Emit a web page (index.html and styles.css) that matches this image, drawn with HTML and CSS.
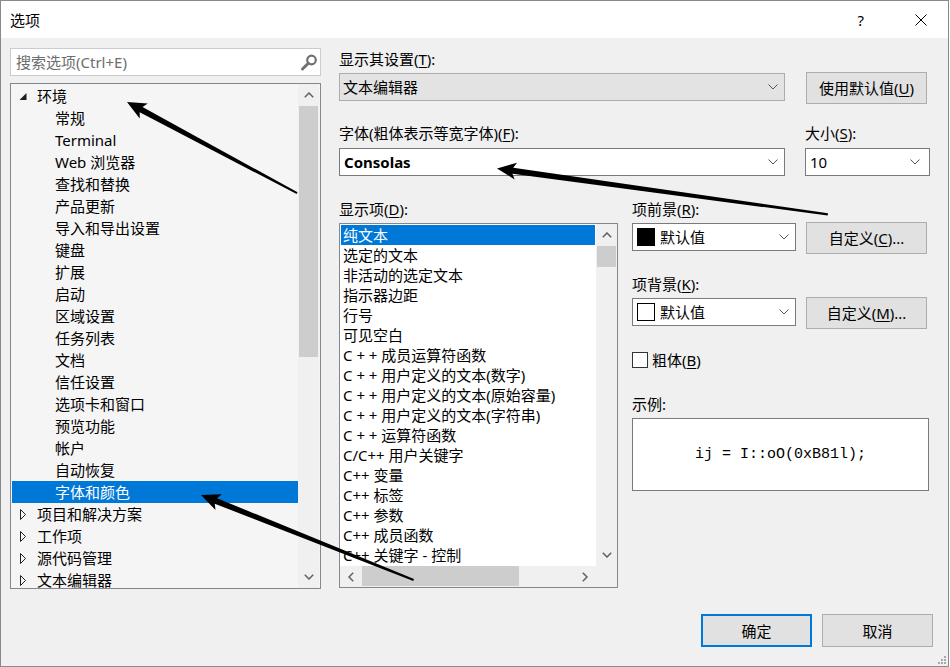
FILE: index.html
```html
<!DOCTYPE html>
<html>
  <head>
    <meta charset="utf-8" />
    <title>选项</title>
    <link rel="stylesheet" href="styles.css">
  </head>
  <body>
    <div class="dialog">
      <div class="titlebar">
        <span class="title">选项</span>
        <span class="help">?</span>
        <svg class="close" width="12" height="12" viewBox="0 0 12 12">
          <path d="M0.5 0.5 L11.5 11.5 M11.5 0.5 L0.5 11.5" stroke="#000" stroke-width="1" fill="none" />
        </svg>
      </div>

      <div class="content">
        <!-- left: search + tree -->
        <div class="left">
          <div class="search">
            <span class="placeholder">搜索选项(Ctrl+E)</span>
            <svg class="search-icon" width="18" height="18" viewBox="0 0 18 18">
              <circle cx="11.5" cy="6" r="4.3" stroke="#717171" stroke-width="2.2" fill="none" />
              <path d="M8.3 9.2 L2.5 15" stroke="#717171" stroke-width="3" stroke-linecap="round" />
            </svg>
          </div>

          <div class="tree">
            <ul class="tree-rows">
              <li class="row">
                <svg class="toggle" width="10" height="14" viewBox="0 0 10 14"><polygon points="7.5,4 7.5,11 0.5,11" fill="#1e1e1e" /></svg>
                环境
              </li>
              <li class="row leaf">常规</li>
              <li class="row leaf">Terminal</li>
              <li class="row leaf">Web 浏览器</li>
              <li class="row leaf">查找和替换</li>
              <li class="row leaf">产品更新</li>
              <li class="row leaf">导入和导出设置</li>
              <li class="row leaf">键盘</li>
              <li class="row leaf">扩展</li>
              <li class="row leaf">启动</li>
              <li class="row leaf">区域设置</li>
              <li class="row leaf">任务列表</li>
              <li class="row leaf">文档</li>
              <li class="row leaf">信任设置</li>
              <li class="row leaf">选项卡和窗口</li>
              <li class="row leaf">预览功能</li>
              <li class="row leaf">帐户</li>
              <li class="row leaf">自动恢复</li>
              <li class="row leaf selected">字体和颜色</li>
              <li class="row">
                <svg class="toggle" width="10" height="14" viewBox="0 0 10 14"><polygon points="1.5,2.5 6.5,7.5 1.5,12.5" fill="none" stroke="#1e1e1e" stroke-width="1" /></svg>
                项目和解决方案
              </li>
              <li class="row">
                <svg class="toggle" width="10" height="14" viewBox="0 0 10 14"><polygon points="1.5,2.5 6.5,7.5 1.5,12.5" fill="none" stroke="#1e1e1e" stroke-width="1" /></svg>
                工作项
              </li>
              <li class="row">
                <svg class="toggle" width="10" height="14" viewBox="0 0 10 14"><polygon points="1.5,2.5 6.5,7.5 1.5,12.5" fill="none" stroke="#1e1e1e" stroke-width="1" /></svg>
                源代码管理
              </li>
              <li class="row">
                <svg class="toggle" width="10" height="14" viewBox="0 0 10 14"><polygon points="1.5,2.5 6.5,7.5 1.5,12.5" fill="none" stroke="#1e1e1e" stroke-width="1" /></svg>
                文本编辑器
              </li>
            </ul>
            <div class="vscroll tree-scroll">
              <div class="sbtn"><svg width="10" height="6" viewBox="0 0 10 6"><path d="M0.8 5.2 L5 1 L9.2 5.2" stroke="#606060" stroke-width="1.5" fill="none" /></svg></div>
              <div class="thumb tree-thumb"></div>
              <div class="track"></div>
              <div class="sbtn"><svg width="10" height="6" viewBox="0 0 10 6"><path d="M0.8 0.8 L5 5 L9.2 0.8" stroke="#606060" stroke-width="1.5" fill="none" /></svg></div>
            </div>
          </div>
        </div>

        <!-- right: settings -->
        <div class="right">
          <div class="top-grid">
            <div class="label">显示其设置(<u>T</u>):</div>
            <div></div>
            <div class="combo disabled">
              <span class="combo-text">文本编辑器</span>
              <svg class="chev" width="10" height="6" viewBox="0 0 10 6"><path d="M0.5 0.5 L5 5 L9.5 0.5" stroke="#555" stroke-width="1" fill="none" /></svg>
            </div>
            <button class="btn btn-default">使用默认值(<u>U</u>)</button>

            <div class="label label-gap">字体(粗体表示等宽字体)(<u>F</u>):</div>
            <div class="label label-gap">大小(<u>S</u>):</div>
            <div class="combo combo-font">
              <span class="combo-text bold">Consolas</span>
              <svg class="chev" width="10" height="6" viewBox="0 0 10 6"><path d="M0.5 0.5 L5 5 L9.5 0.5" stroke="#555" stroke-width="1" fill="none" /></svg>
            </div>
            <div class="combo combo-font combo-size">
              <span class="combo-text">10</span>
              <svg class="chev" width="10" height="6" viewBox="0 0 10 6"><path d="M0.5 0.5 L5 5 L9.5 0.5" stroke="#555" stroke-width="1" fill="none" /></svg>
            </div>
          </div>

          <div class="lower">
            <div class="items-col">
              <div class="label">显示项(<u>D</u>):</div>
              <div class="listbox">
                <ul class="items">
                  <li class="selected">纯文本</li>
                  <li>选定的文本</li>
                  <li>非活动的选定文本</li>
                  <li>指示器边距</li>
                  <li>行号</li>
                  <li>可见空白</li>
                  <li>C + + 成员运算符函数</li>
                  <li>C + + 用户定义的文本(数字)</li>
                  <li>C + + 用户定义的文本(原始容量)</li>
                  <li>C + + 用户定义的文本(字符串)</li>
                  <li>C + + 运算符函数</li>
                  <li>C/C++ 用户关键字</li>
                  <li>C++ 变量</li>
                  <li>C++ 标签</li>
                  <li>C++ 参数</li>
                  <li>C++ 成员函数</li>
                  <li>C++ 关键字 - 控制</li>
                </ul>
                <div class="vscroll list-scroll">
                  <div class="sbtn"><svg width="10" height="6" viewBox="0 0 10 6"><path d="M0.8 5.2 L5 1 L9.2 5.2" stroke="#606060" stroke-width="1.5" fill="none" /></svg></div>
                  <div class="thumb list-thumb"></div>
                  <div class="track"></div>
                  <div class="sbtn"><svg width="10" height="6" viewBox="0 0 10 6"><path d="M0.8 0.8 L5 5 L9.2 0.8" stroke="#606060" stroke-width="1.5" fill="none" /></svg></div>
                </div>
                <div class="hscroll">
                  <div class="sbtn"><svg width="6" height="10" viewBox="0 0 6 10"><path d="M5.2 0.8 L1 5 L5.2 9.2" stroke="#606060" stroke-width="1.5" fill="none" /></svg></div>
                  <div class="thumb h-thumb"></div>
                  <div class="track"></div>
                  <div class="sbtn"><svg width="6" height="10" viewBox="0 0 6 10"><path d="M0.8 0.8 L5 5 L0.8 9.2" stroke="#606060" stroke-width="1.5" fill="none" /></svg></div>
                </div>
                <div class="corner"></div>
              </div>
            </div>

            <div class="color-col">
              <div class="label">项前景(<u>R</u>):</div>
              <div class="color-row">
                <div class="combo combo-color">
                  <span class="swatch black"></span>
                  <span class="combo-text">默认值</span>
                  <svg class="chev" width="10" height="6" viewBox="0 0 10 6"><path d="M0.5 0.5 L5 5 L9.5 0.5" stroke="#555" stroke-width="1" fill="none" /></svg>
                </div>
                <button class="btn btn-custom">自定义(<u>C</u>)...</button>
              </div>

              <div class="label label-bg">项背景(<u>K</u>):</div>
              <div class="color-row">
                <div class="combo combo-color">
                  <span class="swatch white"></span>
                  <span class="combo-text">默认值</span>
                  <svg class="chev" width="10" height="6" viewBox="0 0 10 6"><path d="M0.5 0.5 L5 5 L9.5 0.5" stroke="#555" stroke-width="1" fill="none" /></svg>
                </div>
                <button class="btn btn-custom">自定义(<u>M</u>)...</button>
              </div>

              <label class="check-row">
                <span class="checkbox"></span>
                粗体(<u>B</u>)
              </label>

              <div class="label label-sample">示例:</div>
              <div class="sample">ij = I::oO(0xB81l);</div>
            </div>
          </div>
        </div>
      </div>

      <div class="footer">
        <button class="btn btn-ok">确定</button>
        <button class="btn btn-cancel">取消</button>
      </div>

      <svg class="grip" width="8" height="8" viewBox="0 0 8 8">
        <rect x="6" y="0" width="2" height="2" fill="#a8a8a8" />
        <rect x="3" y="3" width="2" height="2" fill="#a8a8a8" />
        <rect x="6" y="3" width="2" height="2" fill="#a8a8a8" />
        <rect x="0" y="6" width="2" height="2" fill="#a8a8a8" />
        <rect x="3" y="6" width="2" height="2" fill="#a8a8a8" />
        <rect x="6" y="6" width="2" height="2" fill="#a8a8a8" />
      </svg>

      <!-- annotation arrows drawn over the dialog -->
      <svg class="arrows" width="950" height="667" viewBox="0 0 950 667">
        <g transform="translate(127 102) rotate(28.2)">
          <polygon points="0,0 19,-8.5 16,-3 193,-1 193,1 16,3 19,8.5" fill="#000" />
        </g>
        <g transform="translate(497 168.5) rotate(7.9)">
          <polygon points="0,0 19,-8.5 16,-3 334,-1.2 334,1.2 16,3 19,8.5" fill="#000" />
        </g>
        <g transform="translate(201 495) rotate(21.8)">
          <polygon points="0,0 19,-8.5 16,-3 229,-1 229,1 16,3 19,8.5" fill="#000" />
        </g>
      </svg>
    </div>
  </body>
</html>
```

FILE: styles.css
```css
* {
  box-sizing: border-box;
}
body,
html {
  margin: 0;
  background: #fff;
}
body {
  font-family: "Noto Sans", "Noto Sans CJK SC", sans-serif;
  font-size: 15px;
  color: #000;
}
u {
  text-decoration-thickness: 1px;
  text-underline-offset: 2px;
}
ul {
  list-style: none;
  margin: 0;
  padding: 0;
}

.dialog {
  position: relative;
  width: 949px;
  height: 667px;
  border: 1px solid #8a8a8a;
  background: #f0f0f0;
  display: flex;
  flex-direction: column;
}

/* title bar */
.titlebar {
  height: 37px;
  background: #fff;
  display: flex;
  align-items: center;
  padding: 0 0 0 9px;
  line-height: 20px;
}
.title {
  flex-grow: 1;
}
.help {
  margin-right: 51px;
}
.close {
  margin-right: 21px;
}

/* main area */
.content {
  display: flex;
  padding: 10px 0 0 9px;
}
.left {
  width: 311px;
  display: flex;
  flex-direction: column;
}
.search {
  height: 28px;
  border: 1px solid #c9ccd4;
  background: #fff;
  display: flex;
  align-items: center;
  padding: 0 2px 0 5px;
  line-height: 20px;
}
.placeholder {
  flex-grow: 1;
  color: #6d6d6d;
}
.search-icon {
  margin-top: 1px;
}
.tree {
  margin-top: 7px;
  height: 506px;
  border: 1px solid #828790;
  background: #f5f5f5;
  display: flex;
  overflow: hidden;
}
.tree-rows {
  width: 287px;
  padding: 1px 0 0 1px;
}
.row {
  height: 22px;
  line-height: 22px;
  display: flex;
  align-items: center;
  white-space: nowrap;
}
.toggle {
  margin-left: 7px;
  margin-right: 8px;
  flex-shrink: 0;
}
.row.leaf {
  padding-left: 43px;
}
.row.selected {
  background: #0078d7;
  color: #fff;
}

/* scroll bars */
.vscroll {
  width: 21px;
  background: #f0f0f0;
  display: flex;
  flex-direction: column;
}
.sbtn {
  height: 22px;
  display: flex;
  align-items: center;
  justify-content: center;
  flex-shrink: 0;
}
.thumb {
  background: #cdcdcd;
  flex-shrink: 0;
}
.track {
  flex-grow: 1;
}
.vscroll .thumb {
  margin: 0 1px;
}
.tree-thumb {
  height: 251px;
}
.list-thumb {
  height: 21px;
}
.hscroll {
  height: 21px;
  background: #f0f0f0;
  display: flex;
}
.hscroll .sbtn {
  width: 22px;
  height: auto;
}
.h-thumb {
  width: 157px;
  margin: 0 0 1px;
}
.corner {
  background: #f0f0f0;
}

/* right side */
.right {
  margin-left: 18px;
}
.label {
  height: 22px;
  line-height: 22px;
  white-space: nowrap;
}
.label-gap {
  margin-top: 18px;
}
.top-grid {
  display: grid;
  grid-template-columns: 446px 125px;
  column-gap: 20px;
  align-items: start;
}
.combo {
  height: 28px;
  border: 1px solid #7a7a7a;
  background: #fff;
  display: flex;
  align-items: center;
  padding: 0 6px 0 3px;
  line-height: 20px;
}
.combo-text {
  flex-grow: 1;
  white-space: nowrap;
}
.combo.disabled {
  margin-top: 3px;
  background: #e3e3e3;
  border-color: #adadad;
}
.combo-font {
  margin-top: 4px;
  padding-left: 4px;
}
.combo-size {
  padding-right: 9px;
}
.bold {
  font-weight: bold;
}
.chev {
  flex-shrink: 0;
}

.btn {
  font-family: "Noto Sans", "Noto Sans CJK SC", sans-serif;
  font-size: 15px;
  color: #000;
  background: #e1e1e1;
  border: 1px solid #adadad;
  padding: 0;
  line-height: 20px;
}
.btn-default {
  margin: 2px 0 0 1px;
  width: 121px;
  height: 32px;
}

.lower {
  display: flex;
  margin-top: 22px;
}
.items-col {
  width: 279px;
}
.listbox {
  margin-top: 3px;
  height: 365px;
  border: 1px solid #828790;
  background: #fff;
  display: grid;
  grid-template-columns: 256px 21px;
  grid-template-rows: 342px 21px;
}
.items {
  padding: 1px 1px 0;
  overflow: hidden;
}
.items li {
  height: 20px;
  line-height: 20px;
  padding-left: 2px;
  white-space: nowrap;
}
.items li.selected {
  background: #0078d7;
  color: #fff;
}

.color-col {
  margin-left: 14px;
  width: 297px;
}
.color-row {
  display: flex;
  align-items: flex-start;
  gap: 10px;
  margin-top: 2px;
}
.combo-color {
  margin-top: 1px;
  width: 164px;
  padding-left: 4px;
  padding-right: 6px;
}
.swatch {
  width: 18px;
  height: 18px;
  margin-right: 5px;
  flex-shrink: 0;
}
.swatch.black {
  background: #000;
}
.swatch.white {
  background: #fff;
  border: 1px solid #000;
}
.btn-custom {
  width: 121px;
  height: 32px;
}
.label-bg {
  margin-top: 19px;
}
.check-row {
  margin-top: 20px;
  height: 22px;
  line-height: 22px;
  display: flex;
  align-items: center;
}
.checkbox {
  width: 16px;
  height: 16px;
  border: 1px solid #333;
  background: #fff;
  margin-right: 4px;
}
.label-sample {
  margin-top: 22px;
}
.sample {
  margin-top: 3px;
  height: 73px;
  border: 1px solid #7a7a7a;
  background: #fff;
  display: flex;
  align-items: center;
  justify-content: center;
  font-family: "Liberation Mono", "DejaVu Sans Mono", monospace;
  font-size: 15px;
}

/* footer */
.footer {
  display: flex;
  justify-content: flex-end;
  gap: 10px;
  padding: 25px 15px 0 0;
}
.btn-ok,
.btn-cancel {
  width: 111px;
  height: 33px;
}
.btn-ok {
  border: 2px solid #0078d7;
}

.grip {
  position: absolute;
  right: 2px;
  bottom: 2px;
}
.arrows {
  position: absolute;
  left: -1px;
  top: -1px;
  pointer-events: none;
}
```
